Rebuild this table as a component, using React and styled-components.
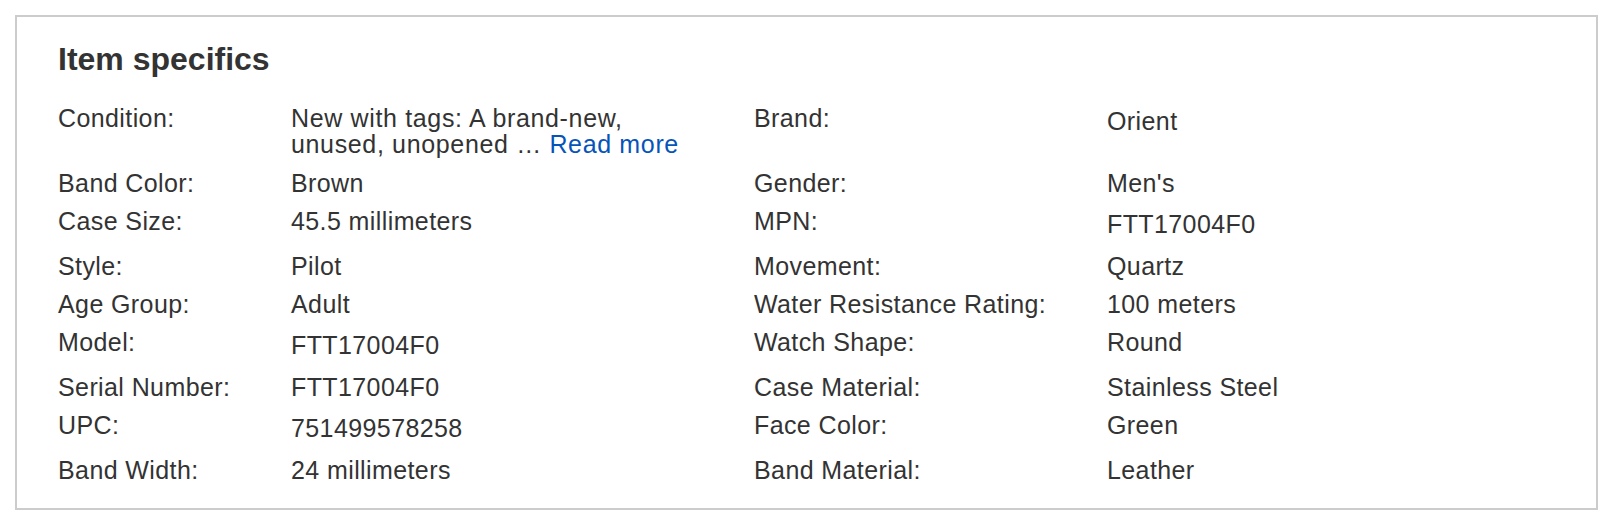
import React from 'react';
import styled, { createGlobalStyle } from 'styled-components';

const GlobalStyle = createGlobalStyle`
  body {
    margin: 0;
    background: #fff;
    font-family: 'Liberation Sans', Arial, Helvetica, sans-serif;
    color: #333;
  }
`;

const specs = [
  { label: 'Brand:', value: 'Orient', tag: true },
  { label: 'Band Color:', value: 'Brown' },
  { label: 'Gender:', value: "Men's" },
  { label: 'Case Size:', value: '45.5 millimeters' },
  { label: 'MPN:', value: 'FTT17004F0', tag: true },
  { label: 'Style:', value: 'Pilot' },
  { label: 'Movement:', value: 'Quartz' },
  { label: 'Age Group:', value: 'Adult' },
  { label: 'Water Resistance Rating:', value: '100 meters' },
  { label: 'Model:', value: 'FTT17004F0', tag: true },
  { label: 'Watch Shape:', value: 'Round' },
  { label: 'Serial Number:', value: 'FTT17004F0' },
  { label: 'Case Material:', value: 'Stainless Steel' },
  { label: 'UPC:', value: '751499578258', tag: true },
  { label: 'Face Color:', value: 'Green' },
  { label: 'Band Width:', value: '24 millimeters' },
  { label: 'Band Material:', value: 'Leather' },
];

const Page = styled.div`
  padding: 15px 16px 14px 15px;
`;

const Box = styled.section`
  border: 2px solid #ccc;
  padding: 22px 40px 13px 41px;
`;

const Title = styled.h2`
  margin: 0 0 26px;
  font-size: 32px;
  line-height: 40px;
  font-weight: 700;
  color: #333;
`;

const Row = styled.div`
  display: grid;
  grid-template-columns: 233px 463px 353px 1fr;
  padding-bottom: ${(p) => (p.$tall ? 16 : 12)}px;
  font-size: 25px;
  line-height: 26px;
  letter-spacing: 0.4px;
`;

const Label = styled.div`
  color: #333;
`;

const Value = styled.div`
  color: #333;
  padding-top: ${(p) => (p.$tag ? 3 : 0)}px;
`;

const Condition = styled.div`
  color: #333;
  padding-bottom: 1px;
  letter-spacing: 0.65px;
`;

const ReadMore = styled.a`
  color: #0654ba;
  text-decoration: none;
  cursor: pointer;
`;

// first row is the condition + brand, the rest pair up left/right
const pairs = [];
for (let i = 1; i < specs.length; i += 2) {
  pairs.push([specs[i], specs[i + 1]]);
}

export default function App() {
  const brand = specs[0];
  return (
    <Page>
      <GlobalStyle />
      <Box>
        <Title>Item specifics</Title>
        <Row>
          <Label>Condition:</Label>
          <Condition>
            New with tags: A brand-new,
            <br />
            unused, unopened … <ReadMore>Read more</ReadMore>
          </Condition>
          <Label>{brand.label}</Label>
          <Value $tag>{brand.value}</Value>
        </Row>
        {pairs.map(([a, b]) => (
          <Row key={a.label} $tall={a.tag || b.tag}>
            <Label>{a.label}</Label>
            <Value $tag={a.tag}>{a.value}</Value>
            <Label>{b.label}</Label>
            <Value $tag={b.tag}>{b.value}</Value>
          </Row>
        ))}
      </Box>
    </Page>
  );
}
